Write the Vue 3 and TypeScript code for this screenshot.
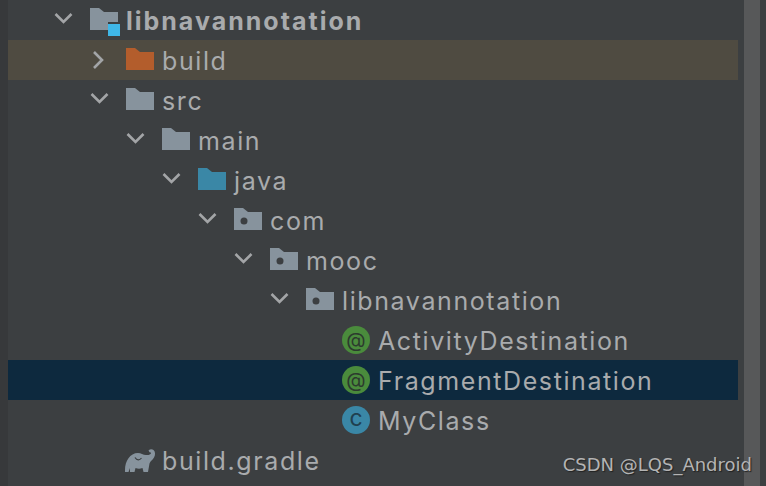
<script setup lang="ts">
interface TreeRow {
  label: string
  depth: number
  arrow?: 'open' | 'closed'
  icon: 'module' | 'folder' | 'build' | 'source' | 'package' | 'annotation' | 'class' | 'gradle'
  bold?: boolean
  state?: 'excluded' | 'selected'
}

const rows: TreeRow[] = [
  { label: 'libnavannotation', depth: 0, arrow: 'open', icon: 'module', bold: true },
  { label: 'build', depth: 1, arrow: 'closed', icon: 'build', state: 'excluded' },
  { label: 'src', depth: 1, arrow: 'open', icon: 'folder' },
  { label: 'main', depth: 2, arrow: 'open', icon: 'folder' },
  { label: 'java', depth: 3, arrow: 'open', icon: 'source' },
  { label: 'com', depth: 4, arrow: 'open', icon: 'package' },
  { label: 'mooc', depth: 5, arrow: 'open', icon: 'package' },
  { label: 'libnavannotation', depth: 6, arrow: 'open', icon: 'package' },
  { label: 'ActivityDestination', depth: 7, icon: 'annotation' },
  { label: 'FragmentDestination', depth: 7, icon: 'annotation', state: 'selected' },
  { label: 'MyClass', depth: 7, icon: 'class' },
  { label: 'build.gradle', depth: 1, icon: 'gradle' },
]

const folderPath = 'M0 0H9L14 4H28V22H0Z'
const folderFill: Record<string, string> = {
  module: '#87939d',
  folder: '#87939d',
  build: '#b35d2c',
  source: '#3a87a6',
  package: '#87939d',
}

const indent = (depth: number) => `${depth * 36}px`
</script>

<template>
  <div class="panel">
    <div class="tree">
      <div
        v-for="row in rows"
        :key="row.label + row.depth"
        class="row"
        :class="row.state"
      >
        <div class="cells" :style="{ marginLeft: indent(row.depth) }">
          <svg v-if="row.arrow" class="arrow" width="20" height="16" viewBox="0 0 20 16">
            <path v-if="row.arrow === 'open'" d="M1.5 2L9.5 10L17.5 2" />
            <path v-else d="M4 0L12 8L4 16" />
          </svg>
          <span v-else class="arrow" />

          <svg v-if="row.icon === 'gradle'" class="elephant" width="36" height="26" viewBox="0 0 36 26">
            <path class="gradle" d="M-1 23C-1 14 4 6 12 6C15 6 17 8 20 8C22 8 23.500 8 24.500 7C25.500 6 25 5 23.500 5.200L22.500 3.500C24 2 26 1.800 27.500 3C29.500 4.500 29.500 8 28 10.500C26.500 13 24.500 14 23.500 16.500L22 25H17.500L16.500 21C14 22 12 22 9.500 21L8.500 25H4L4 21L2.500 25H-1Z" />
            <path class="smile" d="M9 10.500C11 13.500 13.500 13.500 15.500 11" />
          </svg>
          <span v-else-if="row.icon === 'annotation'" class="badge green">@</span>
          <span v-else-if="row.icon === 'class'" class="badge blue">c</span>
          <svg v-else class="icon" width="36" height="28" viewBox="0 0 36 28">
            <path :d="folderPath" :fill="folderFill[row.icon]" />
            <circle v-if="row.icon === 'package'" cx="10" cy="13" r="3.5" fill="#3c3f41" />
            <template v-if="row.icon === 'module'">
              <rect x="18" y="14" width="18" height="14" fill="#3c3f41" />
              <rect x="18" y="16" width="12" height="12" fill="#3fb7e8" />
            </template>
          </svg>

          <span class="label" :class="{ bold: row.bold }">{{ row.label }}</span>
        </div>
      </div>
    </div>
    <div class="scrollbar" />
    <div class="mark">CSDN @LQS_Android</div>
  </div>
</template>

<style scoped>
.panel {
  position: relative;
  display: flex;
  width: 766px;
  height: 486px;
  overflow: hidden;
  background: #3c3f41;
  font-family: Inter, "Liberation Sans", sans-serif;
  border-left: 8px solid #37393b;
  box-sizing: border-box;
}

.tree {
  width: 730px;
  flex: none;
}

.row {
  height: 40px;
  display: flex;
  align-items: center;
  color: #a9abad;
}

.row.excluded {
  background: #4f4b41;
}

.row.selected {
  background: #0d293e;
}

.cells {
  display: flex;
  align-items: center;
  padding-left: 46px;
}

.arrow {
  width: 20px;
  height: 16px;
  flex: none;
  margin-right: 16px;
  fill: none;
  stroke: #a3a5a7;
  stroke-width: 2.6;
  overflow: visible;
}

.icon {
  flex: none;
  margin-top: 4px;
}

.elephant {
  flex: none;
  overflow: visible;
}

.gradle {
  fill: #87939d;
}

.smile {
  fill: none;
  stroke: #3c3f41;
  stroke-width: 1.2;
}

.badge {
  width: 28px;
  height: 28px;
  margin-right: 8px;
  flex: none;
  border-radius: 50%;
  display: flex;
  align-items: center;
  justify-content: center;
  color: #2c3a2e;
  font-size: 20px;
  line-height: 1;
}

.badge.green {
  background: #4a8b3c;
}

.badge.blue {
  background: #3a87a6;
  color: #20404f;
  font-size: 23px;
  padding-bottom: 3px;
  box-sizing: border-box;
}

.label {
  font-size: 25px;
  letter-spacing: 1.6px;
  line-height: 40px;
  padding-top: 2px;
  white-space: nowrap;
}

.label.bold {
  font-weight: 700;
  letter-spacing: 2px;
}

.scrollbar {
  width: 16px;
  height: 100%;
  margin-left: 6px;
  flex: none;
  background: #575859;
}

.mark {
  position: absolute;
  right: 14px;
  bottom: 10px;
  font-family: "DejaVu Sans", sans-serif;
  font-size: 18px;
  line-height: 22px;
  color: #b4b4b4;
  text-shadow: 1px 1px 1px #222;
  white-space: nowrap;
}
</style>
